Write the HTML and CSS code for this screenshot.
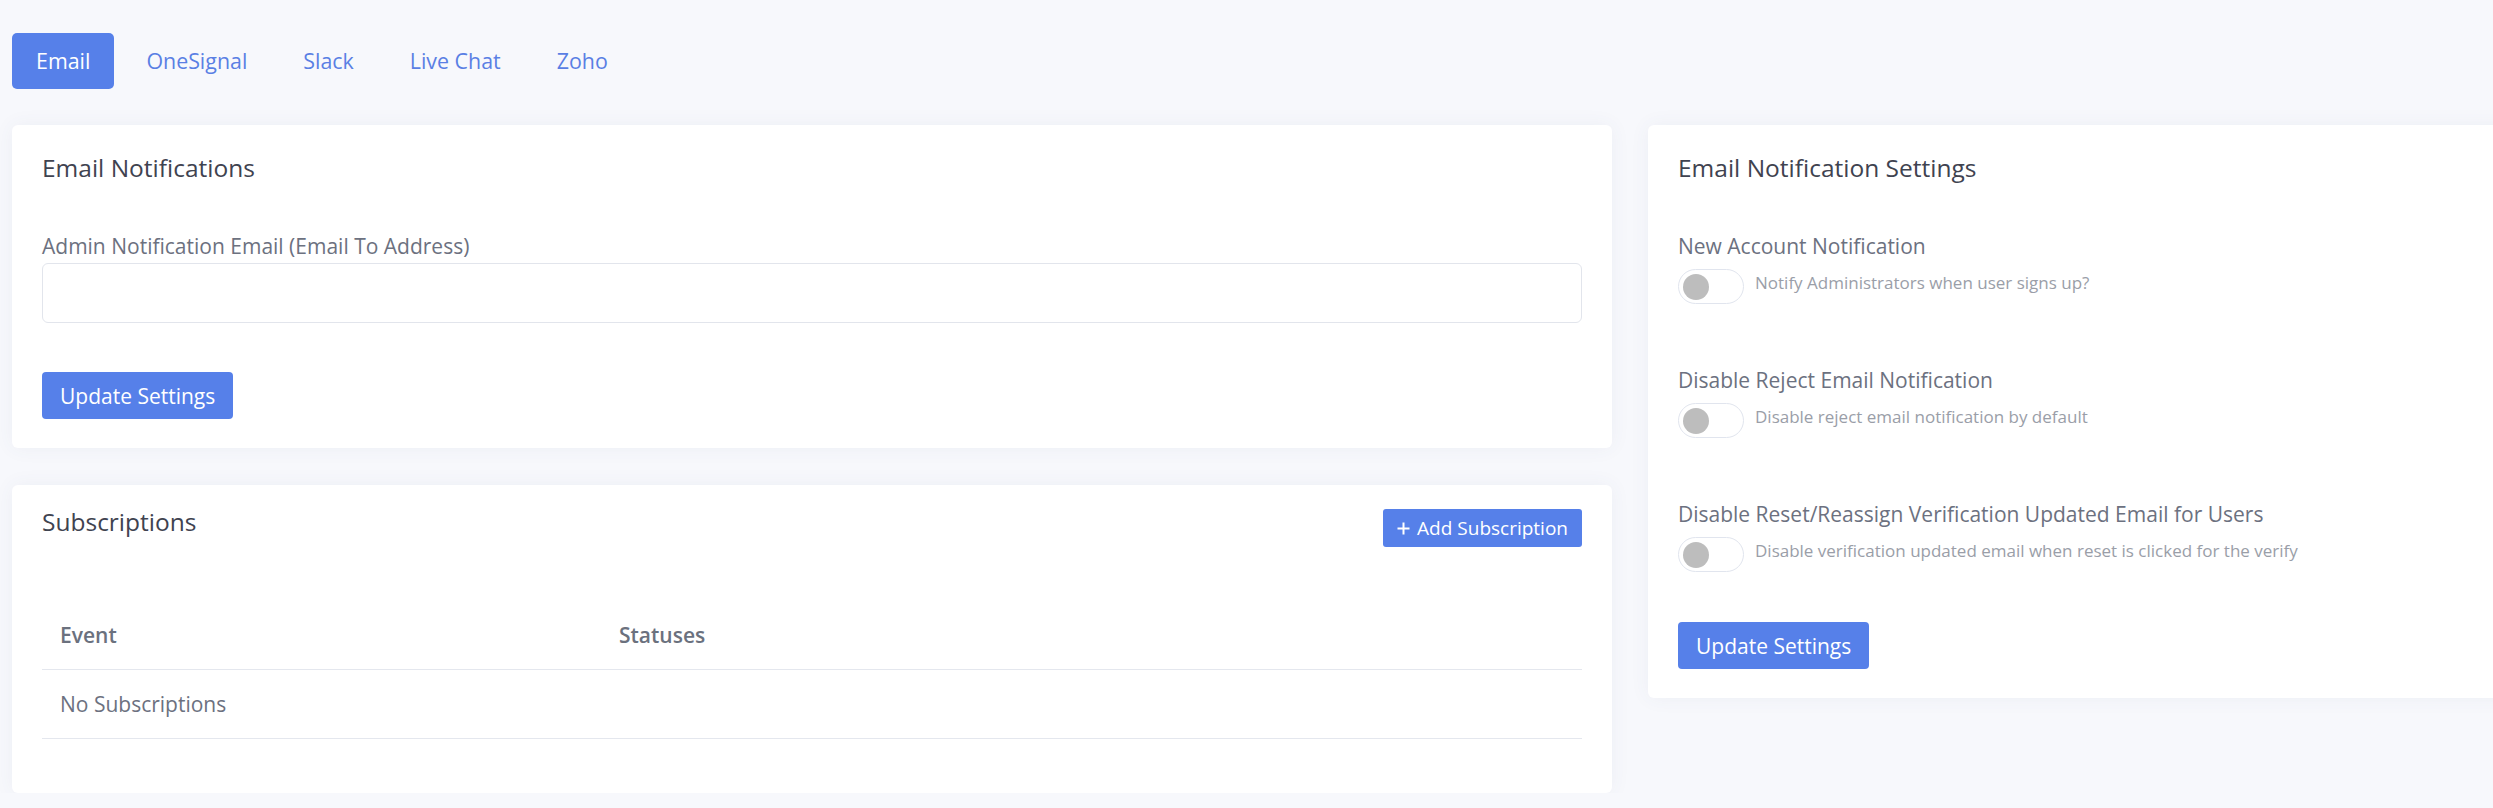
FILE: index.html
```html
<!DOCTYPE html>
<html lang="en">
<head>
<meta charset="utf-8">
<title>Email Notifications</title>
<link rel="stylesheet" href="styles.css">
</head>
<body>
<div class="page">
  <nav class="tabs">
    <a class="tab active">Email</a>
    <a class="tab">OneSignal</a>
    <a class="tab">Slack</a>
    <a class="tab">Live Chat</a>
    <a class="tab">Zoho</a>
  </nav>

  <div class="layout">
    <div class="col-left">
      <section class="card card-form">
        <h3 class="card-title">Email Notifications</h3>
        <div class="field">
          <label class="field-label">Admin Notification Email (Email To Address)</label>
          <input class="input" type="text">
        </div>
        <button class="btn btn-primary">Update Settings</button>
      </section>

      <section class="card card-subs">
        <div class="card-head">
          <h3 class="card-title">Subscriptions</h3>
          <button class="btn btn-small">
            <svg class="plus" width="13" height="13" viewBox="0 0 13 13"><path d="M6.5 0.5v12M0.5 6.5h12" stroke="#fff" stroke-width="2" fill="none"/></svg>
            <span>Add Subscription</span>
          </button>
        </div>
        <table class="table">
          <colgroup><col class="col-event"><col></colgroup>
          <thead>
            <tr><th>Event</th><th>Statuses</th></tr>
          </thead>
          <tbody>
            <tr><td colspan="2">No Subscriptions</td></tr>
          </tbody>
        </table>
      </section>
    </div>

    <div class="col-right">
      <section class="card card-settings">
        <h3 class="card-title">Email Notification Settings</h3>
        <div class="setting">
          <div class="setting-label">New Account Notification</div>
          <div class="setting-row">
            <span class="toggle"><span class="knob"></span></span>
            <span class="setting-desc">Notify Administrators when user signs up?</span>
          </div>
        </div>
        <div class="setting">
          <div class="setting-label">Disable Reject Email Notification</div>
          <div class="setting-row">
            <span class="toggle"><span class="knob"></span></span>
            <span class="setting-desc">Disable reject email notification by default</span>
          </div>
        </div>
        <div class="setting">
          <div class="setting-label">Disable Reset/Reassign Verification Updated Email for Users</div>
          <div class="setting-row">
            <span class="toggle"><span class="knob"></span></span>
            <span class="setting-desc">Disable verification updated email when reset is clicked for the verify</span>
          </div>
        </div>
        <button class="btn btn-primary btn-settings">Update Settings</button>
      </section>
    </div>
  </div>
</div>
</body>
</html>
```

FILE: styles.css
```css
* { box-sizing: border-box; }

html, body {
  margin: 0;
  padding: 0;
  background: #f7f8fc;
  overflow: hidden;
}

body {
  font-family: "Open Sans", "Liberation Sans", sans-serif;
  color: #6c7180;
}

.page {
  padding: 33px 0 0 12px;
  width: 2560px;
}

/* Tabs */
.tabs {
  display: flex;
  gap: 8px;
}

.tab {
  display: block;
  padding: 13px 24px;
  font-size: 21.4px;
  line-height: 30px;
  color: #5a7fe4;
  border-radius: 5px;
}

.tab.active {
  background: #5680e9;
  color: #ffffff;
}

/* Layout */
.layout {
  display: grid;
  grid-template-columns: 1600px 900px;
  column-gap: 36px;
  align-items: start;
  margin-top: 36px;
}

.col-left {
  display: flex;
  flex-direction: column;
  gap: 37px;
}

.card {
  background: #ffffff;
  border-radius: 6px;
  box-shadow: 0 0 20px rgba(76, 87, 125, 0.06);
}

.card-title {
  margin: 0;
  font-size: 24.5px;
  line-height: 32px;
  font-weight: 500;
  color: #3f4350;
}

/* Email Notifications card */
.card-form {
  padding: 27px 30px 29px;
}

.card-form .card-title {
  margin-bottom: 47px;
}

.field-label {
  display: block;
  font-size: 21px;
  line-height: 30px;
  color: #6c7180;
  margin-bottom: 2px;
}

.input {
  display: block;
  width: 100%;
  height: 60px;
  border: 1px solid #e2e5ec;
  border-radius: 6px;
  background: #fff;
  font: inherit;
  outline: none;
}

.field {
  margin-bottom: 49px;
}

.btn {
  font-family: inherit;
  border: 0;
  cursor: pointer;
  color: #ffffff;
  background: #5680e9;
}

.btn-primary {
  display: block;
  padding: 8.5px 18px;
  font-size: 21px;
  line-height: 30px;
  border-radius: 4px;
}

/* Subscriptions card */
.card-subs {
  padding: 21px 30px 54px;
}

.card-head {
  display: flex;
  justify-content: space-between;
  align-items: flex-start;
}

.btn-small {
  display: flex;
  align-items: center;
  gap: 7px;
  margin-top: 3px;
  padding: 5px 14px;
  font-size: 19px;
  line-height: 28px;
  border-radius: 3px;
}

.plus {
  display: block;
  flex: none;
}

.table {
  width: 100%;
  margin-top: 54px;
  border-collapse: collapse;
  table-layout: fixed;
}

.col-event {
  width: 559px;
}

.table th,
.table td {
  text-align: left;
  padding: 19px 18px;
  font-size: 21px;
  line-height: 30px;
  border-bottom: 1px solid #e4e7ee;
}

.table th {
  font-weight: 600;
  color: #6b717e;
}

.table td {
  color: #6c7180;
}

/* Settings card */
.card-settings {
  padding: 27px 30px 29px;
}

.card-settings .card-title {
  margin-bottom: 47px;
}

.setting {
  margin-bottom: 61px;
}

.setting:last-of-type {
  margin-bottom: 50px;
}

.setting-label {
  font-size: 21px;
  line-height: 30px;
  color: #6c7180;
  margin-bottom: 8px;
}

.setting-row {
  display: flex;
  align-items: flex-start;
  gap: 11px;
}

.toggle {
  position: relative;
  display: block;
  flex: none;
  width: 66px;
  height: 35px;
  border: 1px solid #e1e5ee;
  border-radius: 18px;
  background: #ffffff;
}

.knob {
  position: absolute;
  left: 4px;
  top: 3.5px;
  width: 26px;
  height: 26px;
  border-radius: 50%;
  background: #bdbdbd;
}

.setting-desc {
  font-size: 17px;
  line-height: 28px;
  color: #9a9ea8;
}

.btn-settings {
  margin: 0;
}
```
